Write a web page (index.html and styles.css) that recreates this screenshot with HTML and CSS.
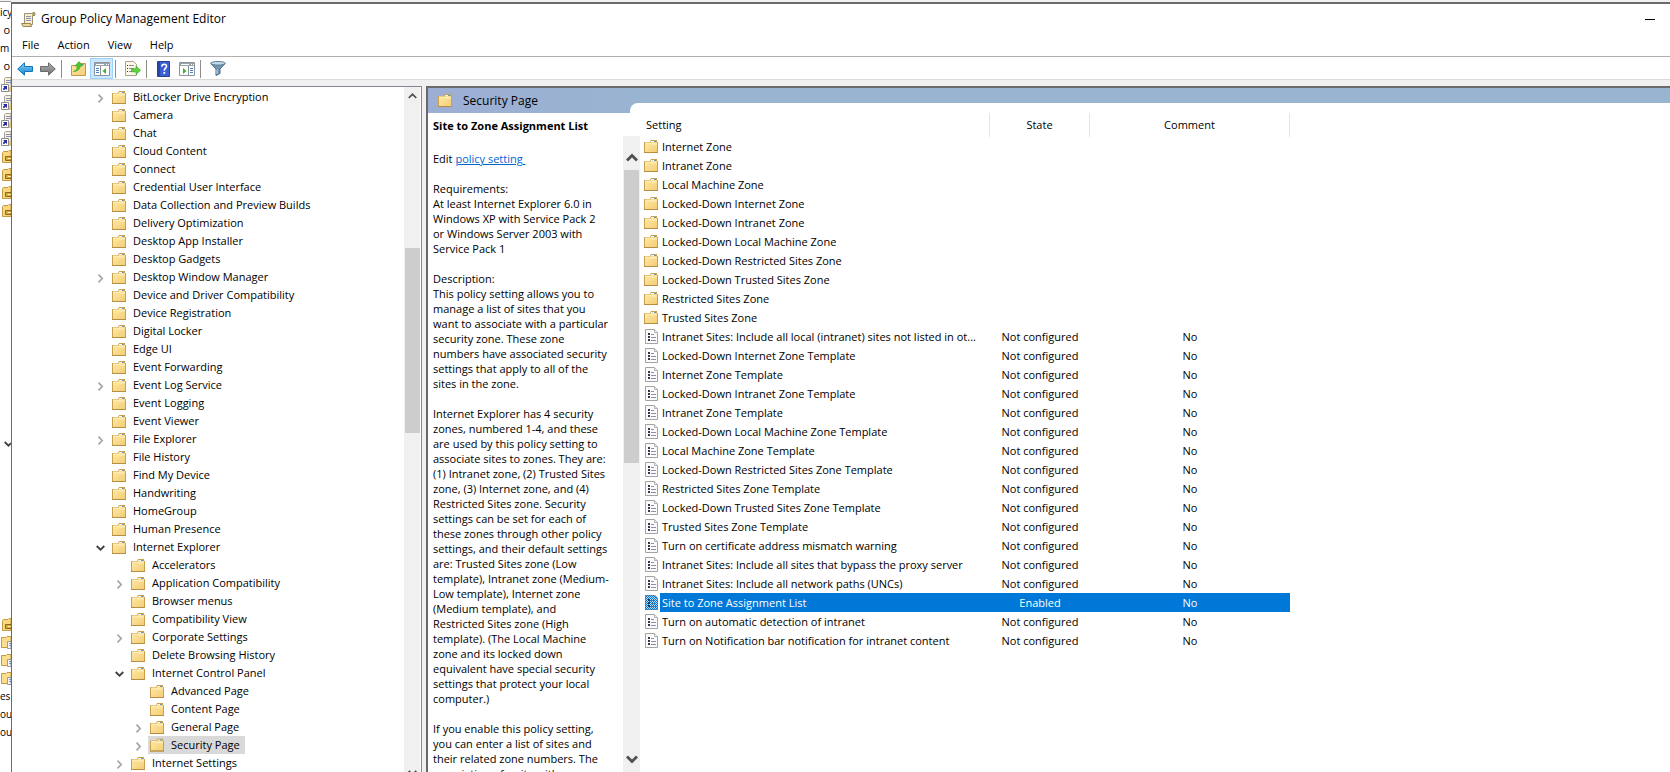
FILE: index.html
```html
<!DOCTYPE html>
<html lang="en">
<head>
    <meta charset="UTF-8">
    <meta name="viewport" content="width=device-width, initial-scale=1.0">
    <title>Group Policy Management Editor</title>
    <link rel="stylesheet" href="styles.css">
</head>
<body>
    <!-- Shared icons -->
    <svg class="sprite" aria-hidden="true">
        <defs>
            <linearGradient id="gold" x1="0" y1="0" x2="1" y2="1">
                <stop offset="0" stop-color="#ffe9a6"/>
                <stop offset="1" stop-color="#f3cd74"/>
            </linearGradient>
            <linearGradient id="blue" x1="0" y1="0" x2="0" y2="1">
                <stop offset="0" stop-color="#7fd0f7"/>
                <stop offset="1" stop-color="#1583cf"/>
            </linearGradient>
            <linearGradient id="grey" x1="0" y1="0" x2="0" y2="1">
                <stop offset="0" stop-color="#b5b5b5"/>
                <stop offset="1" stop-color="#6f6f6f"/>
            </linearGradient>
            <pattern id="dots" width="2" height="2" patternUnits="userSpaceOnUse">
                <path d="M0 0h1v1H0zM1 1h1v1H1z" fill="#0078d7"/>
            </pattern>
        </defs>
        <symbol id="folder" viewBox="0 0 14 13">
            <path d="M0 2h6l1-2h6v2h1v11H0z" fill="#c9a050"/>
            <path d="M1 3h5l1-1h6v10H1z" fill="url(#gold)"/>
            <path d="M7 1h5v1H7z" fill="#fff3cf"/>
            <path d="M10 1h2v1h-2z" fill="#4d9de0"/>
            <path d="M1 3h5l1 1h6" fill="none" stroke="#fff3c4" stroke-width="1"/>
            <path d="M0 12h14v1H0z" fill="#b58d45"/>
        </symbol>
        <symbol id="policy" viewBox="0 0 13 15">
            <path d="M.5.5h9l3 3v11H.5z" fill="#fbfbfb" stroke="#a3a3a3"/>
            <path d="M9.500 .5v3h3" fill="#e8e8e8" stroke="#b5b5b5"/>
            <path d="M3 4h2v2H3zM3 7h2v2H3zM3 10h2v2H3z" fill="#33334d"/>
            <path d="M6 5.500h3M6 8.500h5M6 11.500h5" stroke="#8e8ea8"/>
        </symbol>
        <symbol id="policy-on" viewBox="0 0 13 15">
            <path d="M.5.5h9l3 3v11H.5z" fill="#b9d9f3" stroke="#6f9fc8"/>
            <path d="M0 0h10l3 3v12H0z" fill="url(#dots)"/>
            <path d="M3 4h2v2H3zM3 7h2v2H3zM3 10h2v2H3z" fill="#123a66"/>
            <path d="M6 5.500h3M6 8.500h5M6 11.500h5" stroke="#3d78b0"/>
        </symbol>
        <symbol id="right" viewBox="0 0 6 9">
            <path d="M1 .7l3.700 3.800L1 8.300" fill="none" stroke="#a6a6a6" stroke-width="1.700"/>
        </symbol>
        <symbol id="down" viewBox="0 0 9 6">
            <path d="M.7 1l3.800 3.700L8.300 1" fill="none" stroke="#404040" stroke-width="1.800"/>
        </symbol>
        <symbol id="shortcut" viewBox="0 0 10 15">
            <path d="M3.500 4V1.500l1-1H10v14H3.500z" fill="#f6f1df" stroke="#aaa28c"/>
            <path d="M5 3.500h5M5 5.500h5" stroke="#8c8fb5"/>
            <path d="M8 10h2v5H8z" fill="#e6c775"/>
            <path d="M.5 7.500h7v7h-7z" fill="#fff" stroke="#8d8d8d"/>
            <path d="M2 9h4v4L4.700 11.700 3 13.300 1.700 12 3.300 10.300z" fill="#2a2c9c"/>
        </symbol>
        <symbol id="ou" viewBox="0 0 9 13">
            <path d="M.5 2.500l1-1H6l1-1h2v12H.5z" fill="#f8d77f" stroke="#c39b47"/>
            <path d="M3.500 6.500H9v4H3.500z" fill="#d8ae43" stroke="#8b6717"/>
            <path d="M6 8h3v1H6z" fill="#fff0b0"/>
        </symbol>
        <symbol id="folder-page" viewBox="0 0 10 13">
            <path d="M.5 1.500H5l1-1h4v11H.5z" fill="#fadd8d" stroke="#c39b47"/>
            <path d="M6.500 5.500H10v7H6.500z" fill="#f7f7fb" stroke="#9a9aa8"/>
            <path d="M8 7.500h2M8 9.500h2" stroke="#7896be"/>
        </symbol>
    </svg>

    <!-- Window behind -->
    <div class="behind">
        <div class="behind-row label">icy</div>
        <div class="behind-row">o</div>
        <div class="behind-row label">m</div>
        <div class="behind-row">o</div>
        <div class="behind-row"><svg width="10" height="15"><use href="#shortcut"/></svg></div>
        <div class="behind-row"><svg width="10" height="15"><use href="#shortcut"/></svg></div>
        <div class="behind-row"><svg width="10" height="15"><use href="#shortcut"/></svg></div>
        <div class="behind-row"><svg width="10" height="15"><use href="#shortcut"/></svg></div>
        <div class="behind-row"><svg width="9" height="13"><use href="#ou"/></svg></div>
        <div class="behind-row"><svg width="9" height="13"><use href="#ou"/></svg></div>
        <div class="behind-row"><svg width="9" height="13"><use href="#ou"/></svg></div>
        <div class="behind-row"><svg width="9" height="13"><use href="#ou"/></svg></div>
        <div class="behind-row row-expander"><svg width="7" height="6" viewBox="0 0 7 6"><path d="M.7 1l3.800 3.700L7 2" fill="none" stroke="#404040" stroke-width="1.800"/></svg></div>
        <div class="behind-row row-containers"><svg width="9" height="13"><use href="#ou"/></svg></div>
        <div class="behind-row"><svg width="10" height="13"><use href="#folder-page"/></svg></div>
        <div class="behind-row"><svg width="10" height="13"><use href="#folder-page"/></svg></div>
        <div class="behind-row"><svg width="10" height="13"><use href="#folder-page"/></svg></div>
        <div class="behind-row label">es</div>
        <div class="behind-row label">ou</div>
        <div class="behind-row label">ou</div>
    </div>

    <div class="window">
        <header class="titlebar">
            <svg width="15" height="15" viewBox="0 0 15 15">
                <path d="M3.500 1.500h10v2h-2v9h-8z" fill="#f7efcf" stroke="#9c9070"/>
                <path d="M.5 11.500h9l1 3H2z" fill="#e7d7a0" stroke="#9c8550"/>
                <path d="M12 .5h1.500q1 1.500 0 3H12z" fill="#d8bf7b" stroke="#9c8550"/>
                <path d="M5 4.500h5M5 6.500h5M5 8.500h5" stroke="#8d8fae"/>
            </svg>
            <h1>Group Policy Management Editor</h1>
            <button class="minimize" aria-label="Minimize"></button>
        </header>

        <nav class="menubar">
            <button>File</button>
            <button>Action</button>
            <button>View</button>
            <button>Help</button>
        </nav>

        <div class="toolbar">
            <button aria-label="Back"><svg width="16" height="14" viewBox="0 0 16 14"><path d="M.7 7L7.500.8v3.700h8v5h-8v3.700z" fill="url(#blue)" stroke="#1874b8"/></svg></button>
            <button aria-label="Forward"><svg width="16" height="14" viewBox="0 0 16 14"><path d="M15.300 7L8.500.8v3.700h-8v5h8v3.700z" fill="url(#grey)" stroke="#6b6b6b"/></svg></button>
            <span class="separator"></span>
            <button aria-label="Up one level">
                <svg width="15" height="15" viewBox="0 0 15 15">
                    <path d="M.5 4.500H6l1-2h7.500v12H.5z" fill="url(#gold)" stroke="#c39b47"/>
                    <path d="M10 3.500h3" stroke="#4d9de0"/>
                    <path d="M2.500 10.500Q6.500 9 6.300 5H4L8 .6 11.500 5H9.300Q9 10 2.500 10.500z" fill="#4cc82f" stroke="#2e9a1d" stroke-width=".6"/>
                </svg>
            </button>
            <button class="active" aria-label="Show/Hide Console Tree">
                <svg width="16" height="14" viewBox="0 0 16 14">
                    <path d="M.5.5h15v13H.5z" fill="#fff" stroke="#8b939b"/>
                    <path d="M1 1h14v3H1z" fill="#9aa3ab"/>
                    <path d="M2 2.500h8M12 2.500h1M14 2.500h1" stroke="#fff"/>
                    <path d="M2 6.500h3M2 8.500h3M2 10.500h3" stroke="#4b83c4"/>
                    <path d="M6.500 4v9" stroke="#8b939b"/>
                    <path d="M12 6v6L8.500 9z" fill="#35b52a"/>
                </svg>
            </button>
            <span class="separator"></span>
            <button aria-label="Export List">
                <svg width="16" height="15" viewBox="0 0 16 15">
                    <path d="M.5.5h8l3 3v11H.5z" fill="#fdf9e6" stroke="#a7a28d"/>
                    <path d="M2 4.500h1M2 7.500h1M2 10.500h1" stroke="#333"/>
                    <path d="M4 4.500h5M4 7.500h5M4 10.500h5" stroke="#8e8ea8"/>
                    <path d="M6.500 7.800H11V5l4.600 4.300L11 13.500v-2.700H6.500z" fill="#61d540" stroke="#39a92b" stroke-width=".7"/>
                </svg>
            </button>
            <span class="separator"></span>
            <button aria-label="Help">
                <svg width="13" height="16" viewBox="0 0 13 16">
                    <path d="M.5.5h12v15H.5z" fill="#3b5fd0" stroke="#2b3f94"/>
                    <path d="M1 1h2v14H1z" fill="#2846a8"/>
                    <path d="M4.800 5.600Q5 3.300 7.200 3.300q2.300 0 2.300 2 0 1.300-1.300 2.200-.9.700-.9 2.200" fill="none" stroke="#fff" stroke-width="1.600"/>
                    <path d="M6.400 11h1.800v1.800H6.400z" fill="#fff"/>
                </svg>
            </button>
            <button aria-label="Show/Hide Action Pane">
                <svg width="16" height="14" viewBox="0 0 16 14">
                    <path d="M.5.5h15v13H.5z" fill="#fff" stroke="#8b939b"/>
                    <path d="M1 1h14v3H1z" fill="#9aa3ab"/>
                    <path d="M2 2.500h8M12 2.500h1M14 2.500h1" stroke="#fff"/>
                    <path d="M11 6.500h3M11 8.500h3M11 10.500h3" stroke="#4b83c4"/>
                    <path d="M9.500 4v9" stroke="#8b939b"/>
                    <path d="M4 6v6l3.500-3z" fill="#35b52a"/>
                </svg>
            </button>
            <span class="separator"></span>
            <button aria-label="Filter">
                <svg width="16" height="15" viewBox="0 0 16 15">
                    <path d="M.8 2.500L6 8v6.500l4-2V8l5.200-5.500z" fill="#7396b0" stroke="#4a697f"/>
                    <path d="M7 8.500v4.500" stroke="#d3e3ee"/>
                    <ellipse cx="8" cy="2.300" rx="7.300" ry="1.800" fill="#c5d9e6" stroke="#5b7f98"/>
                </svg>
            </button>
        </div>

        <main class="panes">
            <!-- Console tree -->
            <section class="tree-pane">
                <ul class="tree">
                    <li><svg class="expander" width="6" height="9"><use href="#right"/></svg><svg class="icon"><use href="#folder"/></svg><span>BitLocker Drive Encryption</span></li>
                    <li><svg class="icon"><use href="#folder"/></svg><span>Camera</span></li>
                    <li><svg class="icon"><use href="#folder"/></svg><span>Chat</span></li>
                    <li><svg class="icon"><use href="#folder"/></svg><span>Cloud Content</span></li>
                    <li><svg class="icon"><use href="#folder"/></svg><span>Connect</span></li>
                    <li><svg class="icon"><use href="#folder"/></svg><span>Credential User Interface</span></li>
                    <li><svg class="icon"><use href="#folder"/></svg><span>Data Collection and Preview Builds</span></li>
                    <li><svg class="icon"><use href="#folder"/></svg><span>Delivery Optimization</span></li>
                    <li><svg class="icon"><use href="#folder"/></svg><span>Desktop App Installer</span></li>
                    <li><svg class="icon"><use href="#folder"/></svg><span>Desktop Gadgets</span></li>
                    <li><svg class="expander" width="6" height="9"><use href="#right"/></svg><svg class="icon"><use href="#folder"/></svg><span>Desktop Window Manager</span></li>
                    <li><svg class="icon"><use href="#folder"/></svg><span>Device and Driver Compatibility</span></li>
                    <li><svg class="icon"><use href="#folder"/></svg><span>Device Registration</span></li>
                    <li><svg class="icon"><use href="#folder"/></svg><span>Digital Locker</span></li>
                    <li><svg class="icon"><use href="#folder"/></svg><span>Edge UI</span></li>
                    <li><svg class="icon"><use href="#folder"/></svg><span>Event Forwarding</span></li>
                    <li><svg class="expander" width="6" height="9"><use href="#right"/></svg><svg class="icon"><use href="#folder"/></svg><span>Event Log Service</span></li>
                    <li><svg class="icon"><use href="#folder"/></svg><span>Event Logging</span></li>
                    <li><svg class="icon"><use href="#folder"/></svg><span>Event Viewer</span></li>
                    <li><svg class="expander" width="6" height="9"><use href="#right"/></svg><svg class="icon"><use href="#folder"/></svg><span>File Explorer</span></li>
                    <li><svg class="icon"><use href="#folder"/></svg><span>File History</span></li>
                    <li><svg class="icon"><use href="#folder"/></svg><span>Find My Device</span></li>
                    <li><svg class="icon"><use href="#folder"/></svg><span>Handwriting</span></li>
                    <li><svg class="icon"><use href="#folder"/></svg><span>HomeGroup</span></li>
                    <li><svg class="icon"><use href="#folder"/></svg><span>Human Presence</span></li>
                    <li><svg class="expander" width="9" height="6"><use href="#down"/></svg><svg class="icon"><use href="#folder"/></svg><span>Internet Explorer</span></li>
                    <li class="level-2"><svg class="icon"><use href="#folder"/></svg><span>Accelerators</span></li>
                    <li class="level-2"><svg class="expander" width="6" height="9"><use href="#right"/></svg><svg class="icon"><use href="#folder"/></svg><span>Application Compatibility</span></li>
                    <li class="level-2"><svg class="icon"><use href="#folder"/></svg><span>Browser menus</span></li>
                    <li class="level-2"><svg class="icon"><use href="#folder"/></svg><span>Compatibility View</span></li>
                    <li class="level-2"><svg class="expander" width="6" height="9"><use href="#right"/></svg><svg class="icon"><use href="#folder"/></svg><span>Corporate Settings</span></li>
                    <li class="level-2"><svg class="icon"><use href="#folder"/></svg><span>Delete Browsing History</span></li>
                    <li class="level-2"><svg class="expander" width="9" height="6"><use href="#down"/></svg><svg class="icon"><use href="#folder"/></svg><span>Internet Control Panel</span></li>
                    <li class="level-3"><svg class="icon"><use href="#folder"/></svg><span>Advanced Page</span></li>
                    <li class="level-3"><svg class="icon"><use href="#folder"/></svg><span>Content Page</span></li>
                    <li class="level-3"><svg class="expander" width="6" height="9"><use href="#right"/></svg><svg class="icon"><use href="#folder"/></svg><span>General Page</span></li>
                    <li class="level-3 selected"><svg class="expander" width="6" height="9"><use href="#right"/></svg><svg class="icon"><use href="#folder"/></svg><span>Security Page</span></li>
                    <li class="level-2"><svg class="expander" width="6" height="9"><use href="#right"/></svg><svg class="icon"><use href="#folder"/></svg><span>Internet Settings</span></li>
                </ul>
                <div class="scrollbar tree-scroll">
                    <svg width="9" height="6" viewBox="0 0 9 6"><path d="M.7 5l3.800-3.700L8.300 5" fill="none" stroke="#505050" stroke-width="1.700"/></svg>
                    <div class="thumb"></div>
                    <svg class="arrow-down" width="9" height="6"><use href="#down"/></svg>
                </div>
            </section>

            <section class="result-pane">
                <!-- Extended view -->
                <div class="extended">
                    <div class="page-header">
                        <svg class="icon"><use href="#folder"/></svg>
                        <span>Security Page</span>
                    </div>
                    <h2>Site to Zone Assignment List</h2>
                    <div class="details">
                        <div class="details-text">
                            <p>Edit <a href="#">policy setting&nbsp;</a></p>
                            <p>Requirements:
                                At least Internet Explorer 6.0 in
                                Windows XP with Service Pack 2
                                or Windows Server 2003 with
                                Service Pack 1</p>
                            <p>Description:
                                This policy setting allows you to
                                manage a list of sites that you
                                want to associate with a particular
                                security zone. These zone
                                numbers have associated security
                                settings that apply to all of the
                                sites in the zone.</p>
                            <p>Internet Explorer has 4 security
                                zones, numbered 1-4, and these
                                are used by this policy setting to
                                associate sites to zones. They are:
                                (1) Intranet zone, (2) Trusted Sites
                                zone, (3) Internet zone, and (4)
                                Restricted Sites zone. Security
                                settings can be set for each of
                                these zones through other policy
                                settings, and their default settings
                                are: Trusted Sites zone (Low
                                template), Intranet zone (Medium-
                                Low template), Internet zone
                                (Medium template), and
                                Restricted Sites zone (High
                                template). (The Local Machine
                                zone and its locked down
                                equivalent have special security
                                settings that protect your local
                                computer.)</p>
                            <p>If you enable this policy setting,
                                you can enter a list of sites and
                                their related zone numbers. The
                                association of a site with a zone</p>
                        </div>
                        <div class="scrollbar details-scroll">
                            <svg width="12" height="9" viewBox="0 0 12 9"><path d="M1 7.500l5-5 5 5" fill="none" stroke="#505050" stroke-width="2.800"/></svg>
                            <div class="thumb"></div>
                            <svg class="arrow-down" width="12" height="9" viewBox="0 0 12 9"><path d="M1 1.500l5 5 5-5" fill="none" stroke="#505050" stroke-width="2.800"/></svg>
                        </div>
                    </div>
                </div>

                <!-- Settings list -->
                <div class="settings">
                    <table>
                        <colgroup>
                            <col class="col-setting">
                            <col class="col-state">
                            <col class="col-comment">
                        </colgroup>
                        <thead>
                            <tr><th>Setting</th><th>State</th><th>Comment</th></tr>
                        </thead>
                        <tbody>
                            <tr><td><div class="cell"><svg class="icon"><use href="#folder"/></svg><span>Internet Zone</span></div></td><td></td><td></td></tr>
                            <tr><td><div class="cell"><svg class="icon"><use href="#folder"/></svg><span>Intranet Zone</span></div></td><td></td><td></td></tr>
                            <tr><td><div class="cell"><svg class="icon"><use href="#folder"/></svg><span>Local Machine Zone</span></div></td><td></td><td></td></tr>
                            <tr><td><div class="cell"><svg class="icon"><use href="#folder"/></svg><span>Locked-Down Internet Zone</span></div></td><td></td><td></td></tr>
                            <tr><td><div class="cell"><svg class="icon"><use href="#folder"/></svg><span>Locked-Down Intranet Zone</span></div></td><td></td><td></td></tr>
                            <tr><td><div class="cell"><svg class="icon"><use href="#folder"/></svg><span>Locked-Down Local Machine Zone</span></div></td><td></td><td></td></tr>
                            <tr><td><div class="cell"><svg class="icon"><use href="#folder"/></svg><span>Locked-Down Restricted Sites Zone</span></div></td><td></td><td></td></tr>
                            <tr><td><div class="cell"><svg class="icon"><use href="#folder"/></svg><span>Locked-Down Trusted Sites Zone</span></div></td><td></td><td></td></tr>
                            <tr><td><div class="cell"><svg class="icon"><use href="#folder"/></svg><span>Restricted Sites Zone</span></div></td><td></td><td></td></tr>
                            <tr><td><div class="cell"><svg class="icon"><use href="#folder"/></svg><span>Trusted Sites Zone</span></div></td><td></td><td></td></tr>
                            <tr><td><div class="cell"><svg class="icon policy"><use href="#policy"/></svg><span>Intranet Sites: Include all local (intranet) sites not listed in ot...</span></div></td><td>Not configured</td><td>No</td></tr>
                            <tr><td><div class="cell"><svg class="icon policy"><use href="#policy"/></svg><span>Locked-Down Internet Zone Template</span></div></td><td>Not configured</td><td>No</td></tr>
                            <tr><td><div class="cell"><svg class="icon policy"><use href="#policy"/></svg><span>Internet Zone Template</span></div></td><td>Not configured</td><td>No</td></tr>
                            <tr><td><div class="cell"><svg class="icon policy"><use href="#policy"/></svg><span>Locked-Down Intranet Zone Template</span></div></td><td>Not configured</td><td>No</td></tr>
                            <tr><td><div class="cell"><svg class="icon policy"><use href="#policy"/></svg><span>Intranet Zone Template</span></div></td><td>Not configured</td><td>No</td></tr>
                            <tr><td><div class="cell"><svg class="icon policy"><use href="#policy"/></svg><span>Locked-Down Local Machine Zone Template</span></div></td><td>Not configured</td><td>No</td></tr>
                            <tr><td><div class="cell"><svg class="icon policy"><use href="#policy"/></svg><span>Local Machine Zone Template</span></div></td><td>Not configured</td><td>No</td></tr>
                            <tr><td><div class="cell"><svg class="icon policy"><use href="#policy"/></svg><span>Locked-Down Restricted Sites Zone Template</span></div></td><td>Not configured</td><td>No</td></tr>
                            <tr><td><div class="cell"><svg class="icon policy"><use href="#policy"/></svg><span>Restricted Sites Zone Template</span></div></td><td>Not configured</td><td>No</td></tr>
                            <tr><td><div class="cell"><svg class="icon policy"><use href="#policy"/></svg><span>Locked-Down Trusted Sites Zone Template</span></div></td><td>Not configured</td><td>No</td></tr>
                            <tr><td><div class="cell"><svg class="icon policy"><use href="#policy"/></svg><span>Trusted Sites Zone Template</span></div></td><td>Not configured</td><td>No</td></tr>
                            <tr><td><div class="cell"><svg class="icon policy"><use href="#policy"/></svg><span>Turn on certificate address mismatch warning</span></div></td><td>Not configured</td><td>No</td></tr>
                            <tr><td><div class="cell"><svg class="icon policy"><use href="#policy"/></svg><span>Intranet Sites: Include all sites that bypass the proxy server</span></div></td><td>Not configured</td><td>No</td></tr>
                            <tr><td><div class="cell"><svg class="icon policy"><use href="#policy"/></svg><span>Intranet Sites: Include all network paths (UNCs)</span></div></td><td>Not configured</td><td>No</td></tr>
                            <tr class="selected"><td><div class="cell"><svg class="icon policy"><use href="#policy-on"/></svg><span>Site to Zone Assignment List</span></div></td><td>Enabled</td><td>No</td></tr>
                            <tr><td><div class="cell"><svg class="icon policy"><use href="#policy"/></svg><span>Turn on automatic detection of intranet</span></div></td><td>Not configured</td><td>No</td></tr>
                            <tr><td><div class="cell"><svg class="icon policy"><use href="#policy"/></svg><span>Turn on Notification bar notification for intranet content</span></div></td><td>Not configured</td><td>No</td></tr>
                        </tbody>
                    </table>
                </div>
            </section>
        </main>
    </div>
</body>
</html>
```
FILE: styles.css
```css
/* General */
* {
    box-sizing: border-box;
}

body {
    margin: 0;
    height: 100vh;
    overflow: hidden;
    display: flex;
    background-color: #f0f0f0;
    color: #000;
    font-family: "Open Sans", "Noto Sans", sans-serif;
    font-size: 11px;
    line-height: 18px;
}

button {
    font: inherit;
    color: inherit;
    background: none;
    border: none;
    padding: 0;
}

h1, h2, p, ul {
    margin: 0;
    padding: 0;
    font-size: inherit;
}

svg {
    display: block;
    flex: none;
}

.sprite {
    position: absolute;
    width: 0;
    height: 0;
}

.icon {
    width: 14px;
    height: 13px;
}

/* Window behind */
.behind {
    width: 11px;
    flex: none;
    margin-top: 1px;
    padding-top: 1px;
    border-top: 1px solid #999;
    background-color: #fff;
    overflow: hidden;
}

.behind-row {
    height: 18px;
    display: flex;
    align-items: center;
    justify-content: flex-end;
    padding-right: 1px;
}

.behind-row.label {
    justify-content: flex-start;
    padding-right: 0;
    font-size: 10px;
}

.behind-row svg {
    margin-right: -1px;
}

.row-expander {
    margin-top: 216px;
}

.row-containers {
    margin-top: 162px;
}

/* Main window */
.window {
    flex: 1;
    min-width: 0;
    display: flex;
    flex-direction: column;
    margin-top: 2px;
    border-top: 2px solid #6b6b6b;
    border-left: 1px solid #6b6b6b;
    background-color: #fff;
}

.titlebar {
    display: flex;
    align-items: center;
    height: 30px;
    padding: 0 15px 0 9px;
}

.titlebar h1 {
    flex: 1;
    margin-left: 5px;
    font-size: 12px;
    font-weight: normal;
}

.minimize {
    width: 10px;
    height: 1px;
    background-color: #000;
}

.menubar {
    display: flex;
    align-items: center;
    gap: 18px;
    height: 23px;
    padding-left: 10px;
    border-bottom: 1px solid #b0b0b0;
}

.toolbar {
    display: flex;
    align-items: center;
    height: 23px;
    padding: 1px 0 0 1px;
    border-bottom: 1px solid #dadada;
}

.toolbar button {
    display: flex;
    align-items: center;
    justify-content: center;
    width: 23px;
    height: 21px;
}

.toolbar .active {
    background-color: #cce8ff;
    border: 1px solid #99d1ff;
}

.separator {
    width: 1px;
    height: 18px;
    margin: 0 5px 0 2px;
    background-color: #8d8d8d;
}

.panes {
    flex: 1;
    min-height: 0;
    display: flex;
    gap: 4px;
    padding-top: 6px;
    background-color: #f0f0f0;
}

/* Scrollbars */
.scrollbar {
    flex: none;
    display: flex;
    flex-direction: column;
    align-items: center;
    background-color: #f0f0f0;
}

.thumb {
    background-color: #cdcdcd;
}

.arrow-down {
    margin-top: auto;
}

/* Console tree */
.tree-pane {
    flex: none;
    width: 410px;
    display: flex;
    overflow: hidden;
    border-top: 1px solid #828790;
    border-right: 1px solid #828790;
    background-color: #fff;
}

.tree {
    flex: 1;
    padding-top: 1px;
    list-style: none;
}

.tree li {
    display: flex;
    align-items: center;
    height: 18px;
    padding-left: 98px;
}

.tree li.level-2 {
    padding-left: 117px;
}

.tree li.level-3 {
    padding-left: 136px;
}

.tree .expander {
    width: 9px;
    margin: 2px 5px 0 -14px;
}

.tree .icon {
    width: 18px;
    padding: 0 2px;
}

.tree span {
    padding: 0 5px;
    white-space: nowrap;
}

.tree .selected .icon {
    height: 18px;
    padding: 2px;
}

.tree .selected .icon,
.tree .selected span {
    background-color: #d9d9d9;
}

.tree-scroll {
    width: 16px;
    margin-right: 1px;
    padding-top: 6px;
}

.tree-scroll .thumb {
    width: 15px;
    height: 24vh;
    margin-top: 149px;
}

.tree-scroll .arrow-down {
    margin-bottom: -4px;
}

/* Result pane */
.result-pane {
    flex: 1;
    min-width: 0;
    display: flex;
    border-top: 2px solid #696969;
    border-left: 2px solid #696969;
    background-color: #fff;
}

.extended {
    flex: none;
    width: 212px;
    display: flex;
    flex-direction: column;
}

.page-header {
    display: flex;
    align-items: center;
    gap: 11px;
    height: 25px;
    padding-left: 10px;
    background: linear-gradient(to right, #9daed5, #99b4d1);
    font-size: 12px;
}

.extended h2 {
    padding: 4px 0 0 5px;
    height: 23px;
    white-space: nowrap;
}

.details {
    flex: 1;
    min-height: 0;
    display: flex;
}

.details-text {
    flex: 1;
    min-width: 0;
    overflow: hidden;
    padding: 15px 0 0 5px;
    line-height: 15px;
}

.details-text p {
    margin-bottom: 15px;
    white-space: pre-line;
}

.details-text a {
    color: #0066cc;
}

.details-scroll {
    width: 17px;
    padding: 17px 0 8px;
}

.details-scroll .thumb {
    width: 15px;
    height: 38vh;
    margin-top: 8px;
}

/* Settings list */
.settings {
    flex: 1;
    min-width: 0;
    border-top: 15px solid #99b4d1;
    background-color: #fff;
    position: relative;
}

/* rounded tab corner over the page header */
.settings::before {
    content: "";
    position: absolute;
    top: 0;
    left: -10px;
    width: 10px;
    height: 10px;
    border-top-left-radius: 8px;
    background-color: #fff;
}

table {
    margin-top: 10px;
    table-layout: fixed;
    width: 650px;
    border-collapse: separate;
    border-spacing: 0;
}

.col-setting {
    width: 350px;
}

.col-state {
    width: 100px;
}

.col-comment {
    width: 200px;
}

th, td {
    padding: 0;
    text-align: center;
    font-weight: normal;
    white-space: nowrap;
}

th {
    height: 24px;
    border-right: 1px solid #e5e5e5;
}

th:first-child {
    padding-left: 6px;
    text-align: left;
}

td {
    height: 19px;
}

.cell {
    display: flex;
    align-items: center;
    height: 19px;
    padding-left: 4px;
}

.cell .icon {
    margin-right: 2px;
}

.cell .policy {
    width: 13px;
    height: 15px;
    margin-left: 1px;
}

.cell span {
    flex: 1;
    padding-left: 2px;
    text-align: left;
}

.selected td {
    color: #fff;
}

.selected td + td,
.selected .cell span {
    background-color: #0078d7;
}

.selected .cell span {
    line-height: 19px;
}
```
